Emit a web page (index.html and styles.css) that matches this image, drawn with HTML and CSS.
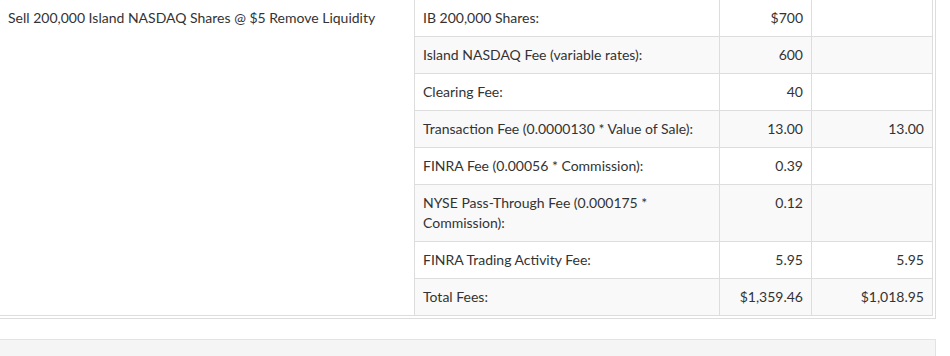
FILE: index.html
```html
<!DOCTYPE html>
<html>
<head>
<meta charset="utf-8">
<link rel="stylesheet" href="styles.css">
</head>
<body>
<div class="panel">
  <table class="fees">
    <colgroup>
      <col class="c-desc">
      <col class="c-label">
      <col class="c-val">
      <col class="c-val2">
    </colgroup>
    <tbody>
      <tr>
        <td class="desc" rowspan="8">Sell 200,000 Island NASDAQ Shares @ $5 Remove Liquidity</td>
        <td>IB 200,000 Shares:</td>
        <td class="num">$700</td>
        <td class="num"></td>
      </tr>
      <tr class="alt">
        <td>Island NASDAQ Fee (variable rates):</td>
        <td class="num">600</td>
        <td class="num"></td>
      </tr>
      <tr>
        <td>Clearing Fee:</td>
        <td class="num">40</td>
        <td class="num"></td>
      </tr>
      <tr class="alt">
        <td>Transaction Fee (0.0000130 * Value of Sale):</td>
        <td class="num">13.00</td>
        <td class="num">13.00</td>
      </tr>
      <tr>
        <td>FINRA Fee (0.00056 * Commission):</td>
        <td class="num">0.39</td>
        <td class="num"></td>
      </tr>
      <tr class="alt">
        <td>NYSE Pass-Through Fee (0.000175 * Commission):</td>
        <td class="num">0.12</td>
        <td class="num"></td>
      </tr>
      <tr>
        <td>FINRA Trading Activity Fee:</td>
        <td class="num">5.95</td>
        <td class="num">5.95</td>
      </tr>
      <tr class="alt">
        <td>Total Fees:</td>
        <td class="num">$1,359.46</td>
        <td class="num">$1,018.95</td>
      </tr>
    </tbody>
  </table>
</div>
<div class="well"></div>
</body>
</html>
```
FILE: styles.css
```css
html, body {
  margin: 0;
  padding: 0;
  background: #fff;
}
body {
  font-family: "Lato", "Open Sans", sans-serif;
  font-size: 14px;
  line-height: 20px;
  color: #333;
}
.panel {
  margin: -4px 14px 0 -4px;
  border: 1px solid #ddd;
  padding: 2px;
}
.fees {
  border-collapse: collapse;
  table-layout: fixed;
  width: 933px;
}
.c-desc { width: 415px; }
.c-label { width: 305px; }
.c-val { width: 92px; }
.c-val2 { width: 121px; }
.fees td {
  border: 1px solid #ddd;
  padding: 8px;
  vertical-align: top;
  background: #fff;
}
.fees tr.alt td {
  background: #f9f9f9;
}
.fees td.num {
  text-align: right;
}
.fees td.desc {
  background: #fff;
}
.well {
  margin: 20px 14px 0 -4px;
  height: 16px;
  background: #f5f5f5;
  border: 1px solid #e3e3e3;
  border-bottom: none;
}
```
